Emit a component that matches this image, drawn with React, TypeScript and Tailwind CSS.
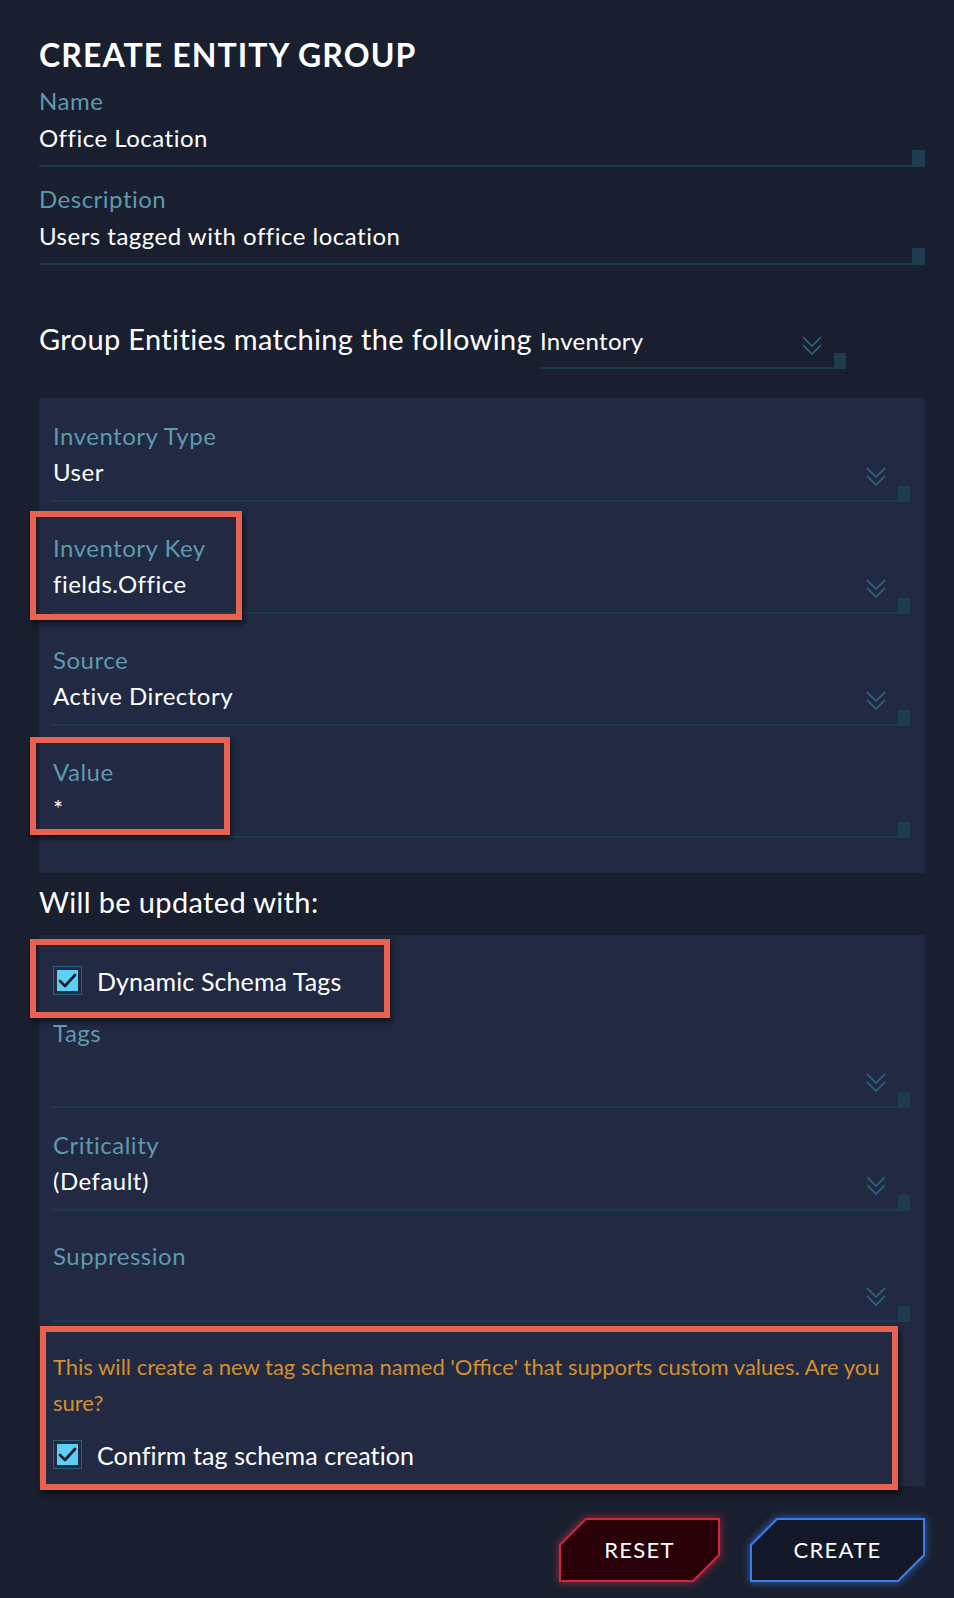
import React from "react";

const Chevron = () => (
  <svg width="20" height="19" viewBox="0 0 20 19" fill="none" stroke="#2c6584" strokeWidth="1.6">
    <polyline points="1,1 10,10 19,1" />
    <polyline points="1,9 10,18 19,9" />
  </svg>
);

const CheckBox = () => (
  <div className="w-[29px] h-[29px] shrink-0 border border-[#2b5e79] p-[3px]">
    <div className="w-full h-full bg-[#5ccff3] flex items-center justify-center">
      <svg width="21" height="21" viewBox="0 0 21 21" fill="none" stroke="#1a1f30" strokeWidth="2.8" strokeLinecap="round" strokeLinejoin="round">
        <polyline points="3,11 8,16 18,5" />
      </svg>
    </div>
  </div>
);

const Annotation = ({ className }: { className: string }) => (
  <div
    className={
      "pointer-events-none absolute border-[6px] border-[#e8624f] shadow-[2px_4px_6px_rgba(0,0,0,0.55)] " +
      className
    }
  />
);

type FieldProps = {
  label: string;
  value?: string;
  chevron?: boolean;
  tall?: boolean;
  className?: string;
  children?: React.ReactNode;
};

const InnerField = ({ label, value, chevron = true, tall = false, className = "", children }: FieldProps) => (
  <div className={"relative flex items-end " + className}>
    <div className="flex-1 border-b-2 border-[#1c3b4c] pb-[15px]">
      <div className="text-[24px] leading-[26px] tracking-[0.5px] text-[#5e98ae]">{label}</div>
      <div className={"mt-[10px] flex items-end justify-between pr-[12px] " + (tall ? "h-[35px]" : "h-[26px]")}>
        <span className="text-[24px] leading-[26px] tracking-[0.5px] text-white">{value}</span>
        {chevron && (
          <span className="translate-y-[1px]">
            <Chevron />
          </span>
        )}
      </div>
    </div>
    <div className="w-[12px] h-[16px] bg-[#1d3c4d]" />
    {children}
  </div>
);

const TopField = ({ label, value, className = "" }: FieldProps) => (
  <div className={"flex items-end " + className}>
    <div className="flex-1 border-b-2 border-[#1c3a4c] pb-[14px]">
      <div className="text-[24px] leading-[26px] tracking-[0.5px] text-[#5e98ae]">{label}</div>
      <div className="mt-[11px] text-[24px] leading-[26px] tracking-[0.5px] text-white">{value}</div>
    </div>
    <div className="w-[13px] h-[17px] bg-[#1d3c4d]" />
  </div>
);

const CutButton = ({
  label,
  width,
  fill,
  stroke,
  glowClass,
  widthClass,
}: {
  label: string;
  width: number;
  fill: string;
  stroke: string;
  glowClass: string;
  widthClass: string;
}) => {
  const w = width;
  const pts = `27,1 ${w - 1},1 ${w - 1},37 ${w - 27},63 1,63 1,27`;
  return (
    <div className={"relative h-[64px] flex items-center justify-center " + widthClass}>
      <svg className={"absolute inset-0 overflow-visible " + glowClass} width={w} height={64} viewBox={`0 0 ${w} 64`}>
        <polygon points={pts} fill={fill} stroke={stroke} strokeWidth="2" />
      </svg>
      <span className="relative text-[22px] leading-[26px] text-white tracking-[1.3px]">{label}</span>
    </div>
  );
};

export default function App() {
  return (
    <div className="min-h-[1598px] w-full bg-[#191f2f] font-['Lato',sans-serif]">
      <div className="pl-[39px] pr-[29px] pt-[37px] pb-[16px]">
        <h1 className="text-[32px] leading-[36px] font-bold tracking-[1.1px] text-white">CREATE ENTITY GROUP</h1>

        <TopField label="Name" value="Office Location" className="mt-[15px]" />
        <TopField label="Description" value="Users tagged with office location" className="mt-[19px]" />

        <div className="mt-[58px] flex items-baseline">
          <span className="text-[29px] leading-[32px] tracking-[0.35px] text-white">Group Entities matching the following</span>
          <div className="ml-[8px] flex w-[306px] items-end">
            <div className="flex flex-1 items-end justify-between border-b-2 border-[#1c3a4c] pb-[12px] pr-[12px]">
              <span className="text-[24px] leading-[28px] tracking-[0.3px] text-white">Inventory</span>
              <Chevron />
            </div>
            <div className="w-[12px] h-[16px] bg-[#1d3c4d]" />
          </div>
        </div>

        <div className="mt-[29px] bg-[#212a42] pl-[14px] pr-[15px] pt-[25px] pb-[35px]">
          <InnerField label="Inventory Type" value="User" />
          <InnerField label="Inventory Key" value="fields.Office" className="mt-[33px]">
            <Annotation className="left-[-23px] top-[-24px] w-[212px] h-[109px]" />
          </InnerField>
          <InnerField label="Source" value="Active Directory" className="mt-[33px]" />
          <InnerField label="Value" value="*" chevron={false} className="mt-[33px]">
            <Annotation className="left-[-23px] top-[-22px] w-[200px] h-[98px]" />
          </InnerField>
        </div>

        <div className="mt-[13px] text-[29px] leading-[32px] tracking-[0.35px] text-white">Will be updated with:</div>

        <div className="mt-[17px] bg-[#212a42] pl-[14px] pr-[15px] pt-[31px] pb-[17px]">
          <div className="relative flex items-center gap-[15px]">
            <CheckBox />
            <span className="text-[25px] leading-[28px] tracking-[0.1px] text-white">Dynamic Schema Tags</span>
            <Annotation className="left-[-23px] top-[-27px] w-[360px] h-[79px]" />
          </div>
          <InnerField label="Tags" value="" tall className="mt-[25px]" />
          <InnerField label="Criticality" value="(Default)" className="mt-[24px]" />
          <InnerField label="Suppression" value="" className="mt-[32px]" />

          <div className="relative pt-[27px]">
            <p className="text-[22px] leading-[36px] text-[#d38f2d]">
              <span className="block whitespace-nowrap">
                This will create a new tag schema named 'Office' that supports custom values. Are you
              </span>
              <span className="block">sure?</span>
            </p>
            <div className="mt-[19px] flex items-center gap-[15px]">
              <CheckBox />
              <span className="text-[25px] leading-[28px] tracking-[0.1px] text-white">Confirm tag schema creation</span>
            </div>
            <Annotation className="left-[-13px] top-[4px] w-[858px] h-[164px]" />
          </div>
        </div>

        <div className="mt-[32px] flex justify-end gap-[30px]">
          <CutButton
            label="RESET"
            width={161}
            widthClass="w-[161px]"
            fill="#2a0009"
            stroke="#c9293f"
            glowClass="drop-shadow-[0_0_4px_rgba(220,40,70,0.75)]"
          />
          <CutButton
            label="CREATE"
            width={175}
            widthClass="w-[175px]"
            fill="#131828"
            stroke="#3b7de6"
            glowClass="drop-shadow-[0_0_4px_rgba(60,125,230,0.75)]"
          />
        </div>
      </div>
    </div>
  );
}
